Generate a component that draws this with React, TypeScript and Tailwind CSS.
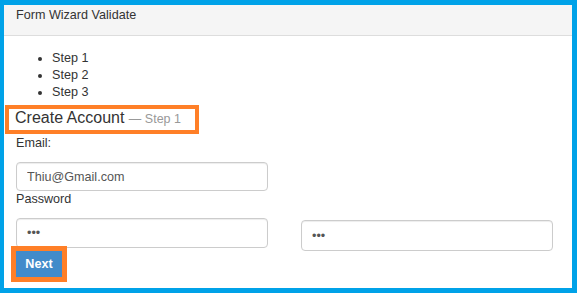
import React from 'react';

const inputClass =
  "block w-full rounded-[4px] border border-[#ccc] bg-white pl-[10px] text-[12.6px] text-[#555] shadow-[inset_0_1px_1px_rgba(0,0,0,0.075)] outline-none";

const App: React.FC = () => {
  return (
    <div className="w-[577px] h-[293px] flex flex-col bg-white border-solid border-[#00a2e8] border-t-[5px] border-l-[4px] border-r-[5px] border-b-[5px] font-['Liberation_Sans',Arial,sans-serif] text-[12.6px] text-[#333]">
      {/* Panel heading */}
      <div className="h-[31px] shrink-0 bg-[#f5f5f5] border-b border-[#ddd] pl-3 pt-[2px] leading-[17px]">
        Form Wizard Validate
      </div>

      {/* Panel body */}
      <div className="flex-1 px-3">
        <ul className="mt-[14px] pl-[36px] list-disc leading-[17px]">
          <li>Step 1</li>
          <li>Step 2</li>
          <li>Step 3</li>
        </ul>

        <h3 className="-ml-[11px] mt-[4px] w-[194px] h-[29px] border-4 border-[#ff7f27] pl-[6px] pb-[4px] text-[16px] leading-[17px] whitespace-nowrap">
          Create Account <small className="text-[12.5px] text-[#999]">— Step 1</small>
        </h3>

        <div className="grid grid-cols-[252px_252px] gap-x-[33px]">
          <div>
            <label className="block mt-[1px] leading-[17px]">Email:</label>
            <input
              type="text"
              readOnly
              defaultValue="Thiu@Gmail.com"
              className={`${inputClass} mt-[10px] h-[29px]`}
            />
          </div>
          <div />
          <div>
            <label className="block leading-[17px]">Password</label>
            <input
              type="password"
              readOnly
              defaultValue="abc"
              className={`${inputClass} mt-[10px] h-[30px]`}
            />
          </div>
          <div className="pt-[29px]">
            <input
              type="password"
              readOnly
              defaultValue="abc"
              className={`${inputClass} h-[31px]`}
            />
          </div>
        </div>

        <button className="-mt-[5px] -ml-[5px] relative flex items-center justify-center w-[56px] h-[36px] border-[5px] border-[#ff7f27] bg-[#428bca] text-white font-bold text-[12.6px] leading-none">
          Next
        </button>
      </div>
    </div>
  );
};

export default App;
